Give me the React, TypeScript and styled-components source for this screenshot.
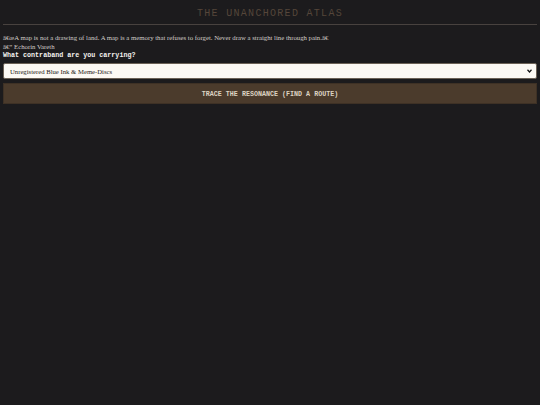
import React from "react";
import styled, { createGlobalStyle } from "styled-components";

const GlobalStyle = createGlobalStyle`
  html, body {
    margin: 0;
    padding: 0;
    background: #1c1b1d;
  }
  body {
    font-family: "Liberation Serif", "Times New Roman", serif;
    -webkit-font-smoothing: antialiased;
  }
`;

const Page = styled.main`
  min-height: 405px;
  padding: 8px 3px;
  box-sizing: border-box;
  background: #1c1b1d;
`;

const Title = styled.h1`
  margin: 0;
  padding-bottom: 4px;
  text-align: center;
  font-family: "Liberation Mono", "Courier New", monospace;
  font-weight: normal;
  font-size: 10px;
  line-height: 12px;
  letter-spacing: 1.3px;
  color: #55463a;
  border-bottom: 1px solid #48423f;
`;

const Lore = styled.section`
  padding-top: 8px;
  color: #d2cdc9;
  font-size: 6.75px;
  line-height: 9px;
`;

const Line = styled.div``;

const Label = styled.label`
  display: block;
  font-family: "Liberation Mono", "Courier New", monospace;
  font-weight: bold;
  font-size: 6.7px;
  line-height: 8px;
  color: #f4f2ef;
`;

const SelectWrap = styled.div`
  position: relative;
  margin-top: 4px;
`;

const Cargo = styled.select`
  display: block;
  width: 100%;
  height: 16px;
  padding: 0 6px;
  box-sizing: border-box;
  appearance: none;
  font-family: "Liberation Serif", "Times New Roman", serif;
  font-size: 6.7px;
  color: #1e1b18;
  background: #fcf9f4;
  border: 1px solid #6b6156;
  border-radius: 2px;
  outline: none;
`;

const Caret = styled.svg`
  position: absolute;
  right: 5px;
  top: 6px;
  width: 5px;
  height: 4px;
  pointer-events: none;
`;

const TraceButton = styled.button`
  display: block;
  width: 100%;
  height: 21px;
  margin-top: 4px;
  padding: 0;
  box-sizing: border-box;
  font-family: "Liberation Mono", "Courier New", monospace;
  font-weight: bold;
  font-size: 6.7px;
  color: #ddd3c3;
  background: #4b3b2c;
  border: 1px solid #3e3125;
  cursor: pointer;
`;

const cargoOptions = [
  "Unregistered Blue Ink & Meme-Discs",
  "Salt-Sealed Letters",
  "Unmarked Compass Needles",
];

export default function App() {
  return (
    <>
      <GlobalStyle />
      <Page>
        <Title>THE UNANCHORED ATLAS</Title>
        <Lore>
          <Line>
            â€œA map is not a drawing of land. A map is a memory that refuses to
            forget. Never draw a straight line through pain.â€
          </Line>
          <Line>â€” Echorin Vareth</Line>
          <Label htmlFor="cargo">What contraband are you carrying?</Label>
        </Lore>
        <SelectWrap>
          <Cargo id="cargo" defaultValue={cargoOptions[0]}>
            {cargoOptions.map((c) => (
              <option key={c} value={c}>
                {c}
              </option>
            ))}
          </Cargo>
          <Caret viewBox="0 0 10 8">
            <path d="M1 1.5 L5 6 L9 1.5" fill="none" stroke="#111" strokeWidth="2.4" />
          </Caret>
        </SelectWrap>
        <TraceButton>TRACE THE RESONANCE (FIND A ROUTE)</TraceButton>
      </Page>
    </>
  );
}
